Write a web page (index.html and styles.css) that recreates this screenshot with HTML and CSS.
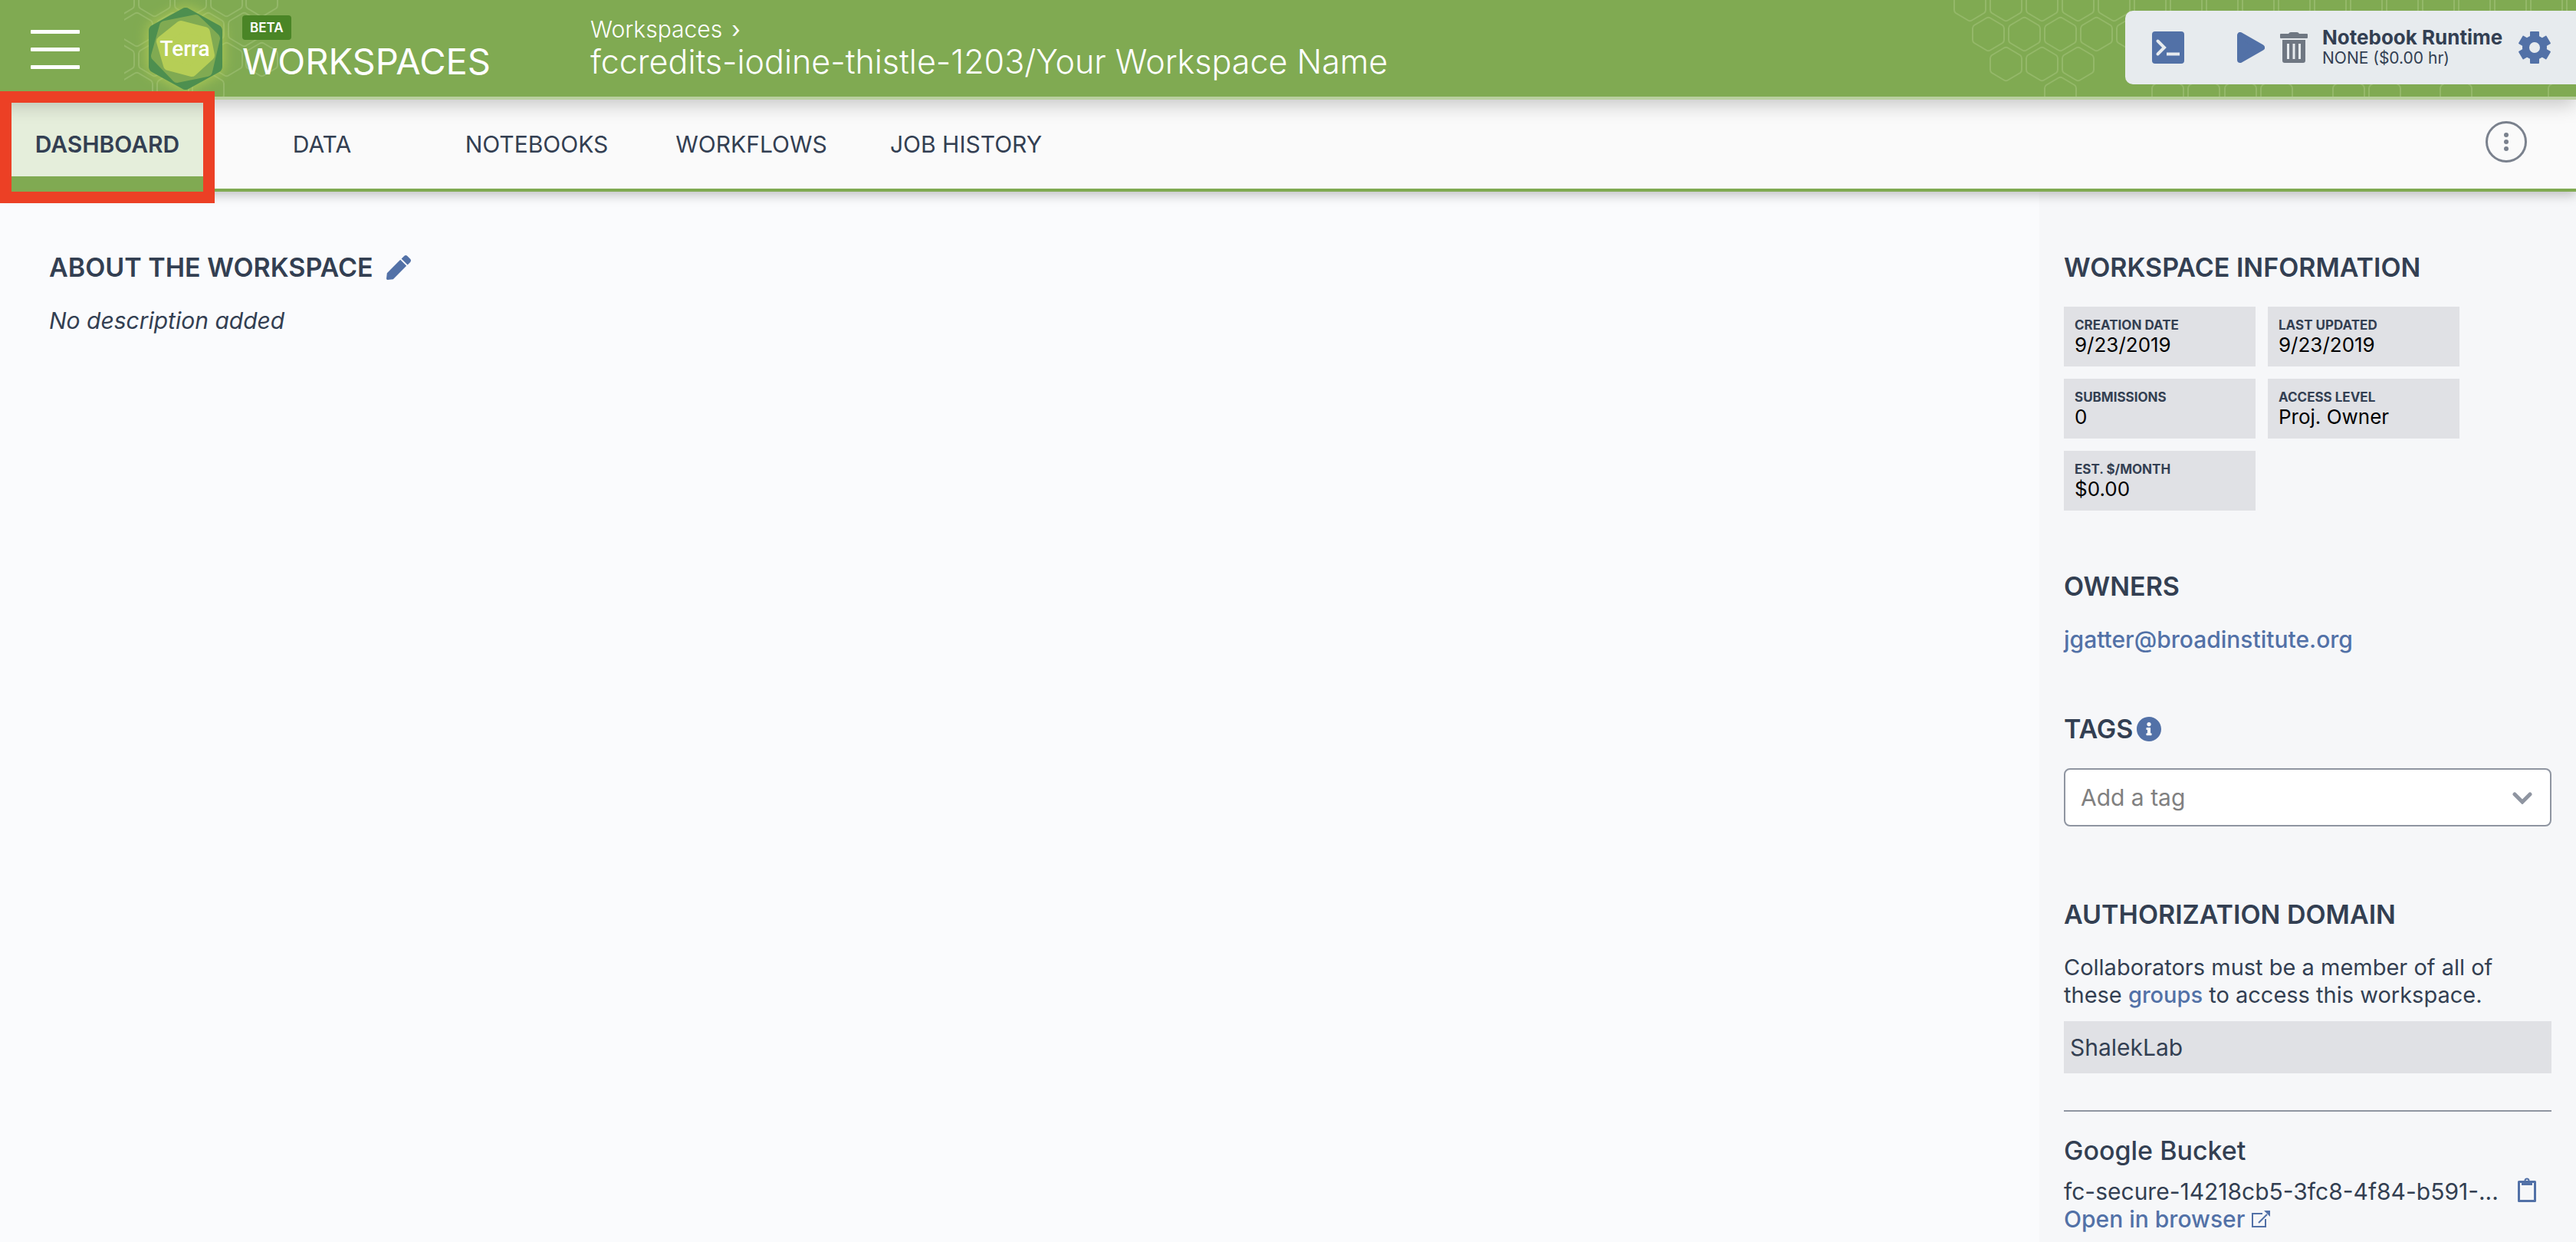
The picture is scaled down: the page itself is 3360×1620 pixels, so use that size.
FILE: index.html
```html
<!DOCTYPE html>
<html lang="en">
<head>
<meta charset="utf-8">
<title>Workspace dashboard</title>
<meta name="viewport" content="width=device-width, initial-scale=1">
<link rel="stylesheet" href="styles.css">
</head>
<body>
<header class="topbar">
  <svg class="topbar-pattern" width="820" height="126" viewBox="0 0 820 126" aria-hidden="true">
    <defs>
      <path id="hex" d="M18 1.500Q20.500 0 23 1.500L39 11Q41 12.500 41 15V30Q41 32.500 39 34L23 43.500Q20.500 45 18 43.500L2 34Q0 32.500 0 30V15Q0 12.500 2 11Z"/>
    </defs>
    <g fill="none" stroke="#94b869" stroke-width="2">
      <use href="#hex" x="9" y="-17"/><use href="#hex" x="56" y="-17"/><use href="#hex" x="103" y="-17"/><use href="#hex" x="150" y="-17"/><use href="#hex" x="197" y="-17"/><use href="#hex" x="244" y="-17"/><use href="#hex" x="291" y="-17"/><use href="#hex" x="338" y="-17"/><use href="#hex" x="385" y="-17"/><use href="#hex" x="432" y="-17"/><use href="#hex" x="479" y="-17"/><use href="#hex" x="526" y="-17"/><use href="#hex" x="573" y="-17"/><use href="#hex" x="620" y="-17"/><use href="#hex" x="667" y="-17"/><use href="#hex" x="714" y="-17"/><use href="#hex" x="761" y="-17"/><use href="#hex" x="808" y="-17"/>
      <use href="#hex" x="33" y="22"/><use href="#hex" x="80" y="22"/><use href="#hex" x="127" y="22"/><use href="#hex" x="174" y="22"/><use href="#hex" x="221" y="22"/>
      <use href="#hex" x="56" y="61"/><use href="#hex" x="103" y="61"/><use href="#hex" x="150" y="61"/>
      <use href="#hex" x="127" y="100"/><use href="#hex" x="267" y="100"/><use href="#hex" x="314" y="100"/><use href="#hex" x="362" y="100"/><use href="#hex" x="409" y="100"/><use href="#hex" x="503" y="100"/><use href="#hex" x="550" y="100"/><use href="#hex" x="643" y="100"/><use href="#hex" x="784" y="100"/>
    </g>
  </svg>
  <button class="burger" type="button" aria-label="Menu"><span></span><span></span><span></span></button>
  <a class="brand" href="#" aria-label="Terra home">
    <svg width="208" height="126" viewBox="0 0 208 126">
      <g fill="none" stroke="#94b869" stroke-width="2">
        <use href="#hex" x="-28" y="-23"/><use href="#hex" x="19" y="-23"/><use href="#hex" x="66" y="-23"/><use href="#hex" x="113" y="-23"/><use href="#hex" x="159" y="-23"/>
        <use href="#hex" x="-4" y="16"/><use href="#hex" x="43" y="16"/><use href="#hex" x="89" y="16"/><use href="#hex" x="136" y="16"/>
        <use href="#hex" x="-28" y="55"/><use href="#hex" x="19" y="55"/><use href="#hex" x="113" y="55"/><use href="#hex" x="159" y="55"/>
        <use href="#hex" x="-4" y="94"/><use href="#hex" x="43" y="94"/><use href="#hex" x="89" y="94"/>
      </g>
      <g stroke-linejoin="round">
        <path class="glow" d="M80 18L120 40V87L80 109L40 87V40Z" fill="#4d8f4f" stroke="#4d8f4f" stroke-width="16"/>
        <path d="M93 26L118 50L108 93L69 101L42 73L53 34Z" fill="#80aa52" stroke="#80aa52" stroke-width="14"/>
        <path d="M74 34L105 42L111 72L88 93L58 85L49 54Z" fill="#b6ce56" stroke="#b6ce56" stroke-width="14"/>
      </g>
      <text class="brand-name" x="79" y="73" text-anchor="middle">Terra</text>
    </svg>
  </a>
  <div class="product">
    <span class="beta">BETA</span>
    <span class="product-name">WORKSPACES</span>
  </div>
  <div class="crumbs">
    <a class="crumb" href="#">Workspaces<span class="crumb-arrow">›</span></a>
    <h1 class="workspace-name">fccredits-iodine-thistle-1203/Your Workspace Name</h1>
  </div>
  <div class="runtime">
    <button class="icon-button terminal" type="button" aria-label="Open terminal">
      <svg width="42" height="42" viewBox="0 0 42 42"><rect width="42" height="42" rx="4" fill="#5271a7"/><path d="M7.500 12.500L16 21L7.500 29.500" fill="none" stroke="#e7ebee" stroke-width="4" stroke-linecap="round"/><path d="M19 29.500H36" stroke="#e7ebee" stroke-width="4"/></svg>
    </button>
    <button class="icon-button" type="button" aria-label="Start runtime">
      <svg width="36" height="40" viewBox="0 0 36 40"><path fill="#5271a7" stroke="#5271a7" stroke-width="8" stroke-linejoin="round" d="M4 4V36L32 20Z"/></svg>
    </button>
    <button class="icon-button trash" type="button" aria-label="Delete runtime">
      <svg width="36" height="40" viewBox="0 0 36 40"><path fill="#6f7782" d="M1 2H11Q12 0 14 0H22Q24 0 25 2H35Q36 2 36 3V7Q36 8 35 8H1Q0 8 0 7V3Q0 2 1 2ZM3 10H33V37Q33 40 30 40H6Q3 40 3 37Z"/><path d="M10.500 15V35M18 15V35M25.500 15V35" stroke="#e7ebee" stroke-width="3"/></svg>
    </button>
    <div class="runtime-text">
      <strong>Notebook Runtime</strong>
      <span>NONE ($0.00 hr)</span>
    </div>
    <button class="icon-button" type="button" aria-label="Runtime settings">
      <svg width="42" height="42" viewBox="-21 -21 42 42">
        <defs><path id="tooth" d="M-5 -21H5Q6 -21 6 -20V-13L8 -8H-8L-6 -13V-20Q-6 -21 -5 -21Z"/></defs>
        <g fill="#5271a7">
          <circle r="16"/>
          <use href="#tooth"/><use href="#tooth" transform="rotate(60)"/><use href="#tooth" transform="rotate(120)"/><use href="#tooth" transform="rotate(180)"/><use href="#tooth" transform="rotate(240)"/><use href="#tooth" transform="rotate(300)"/>
        </g>
        <circle r="7" fill="#e7ebee"/>
      </svg>
    </button>
  </div>
</header>

<nav class="tabs" aria-label="Workspace">
  <a class="tab tab-active" href="#" aria-current="page">DASHBOARD<span class="highlight"></span></a>
  <a class="tab" href="#">DATA</a>
  <a class="tab" href="#">NOTEBOOKS</a>
  <a class="tab" href="#">WORKFLOWS</a>
  <a class="tab" href="#">JOB HISTORY</a>
  <button class="icon-button tabs-menu" type="button" aria-label="Workspace menu">
    <svg width="54" height="54" viewBox="0 0 54 54"><circle cx="27" cy="27" r="25.500" fill="none" stroke="#7a818d" stroke-width="3"/><g fill="#7a818d"><circle cx="27" cy="18" r="3"/><circle cx="27" cy="27" r="3"/><circle cx="27" cy="36" r="3"/></g></svg>
  </button>
</nav>

<div class="page">
  <main class="about">
    <h2 class="heading">ABOUT THE WORKSPACE
      <button class="icon-button edit" type="button" aria-label="Edit description"><svg width="32" height="32" viewBox="0 0 512 512"><path fill="#5271a7" d="M290.740 93.240l128.020 128.020-277.990 277.990-114.140 12.600C11.350 513.540-1.560 500.620.14 485.340l12.700-114.220 277.900-277.880zm207.200-19.060l-60.110-60.110c-18.750-18.750-49.160-18.750-67.910 0l-56.550 56.550 128.020 128.020 56.550-56.550c18.750-18.760 18.750-49.160 0-67.910z"/></svg></button>
    </h2>
    <p class="empty">No description added</p>
  </main>

  <aside class="sidebar">
    <section class="section">
      <h2 class="heading">WORKSPACE INFORMATION</h2>
      <dl class="tiles">
        <div class="tile"><dt>CREATION DATE</dt><dd>9/23/2019</dd></div>
        <div class="tile"><dt>LAST UPDATED</dt><dd>9/23/2019</dd></div>
        <div class="tile"><dt>SUBMISSIONS</dt><dd>0</dd></div>
        <div class="tile"><dt>ACCESS LEVEL</dt><dd>Proj. Owner</dd></div>
        <div class="tile"><dt>EST. $/MONTH</dt><dd>$0.00</dd></div>
      </dl>
    </section>
    <section class="section">
      <h2 class="heading">OWNERS</h2>
      <a class="link" href="mailto:jgatter@broadinstitute.org">jgatter@broadinstitute.org</a>
    </section>
    <section class="section">
      <h2 class="heading"><label for="tags">TAGS</label>
        <button class="icon-button info" type="button" aria-label="About tags"><svg width="32" height="32" viewBox="8 8 496 496"><path fill="#5271a7" d="M256 8C119.043 8 8 119.083 8 256c0 136.997 111.043 248 248 248s248-111.003 248-248C504 119.083 392.957 8 256 8zm0 110c23.196 0 42 18.804 42 42s-18.804 42-42 42-42-18.804-42-42 18.804-42 42-42zm56 254c0 6.627-5.373 12-12 12h-88c-6.627 0-12-5.373-12-12v-24c0-6.627 5.373-12 12-12h12v-64h-12c-6.627 0-12-5.373-12-12v-24c0-6.627 5.373-12 12-12h64c6.627 0 12 5.373 12 12v100h12c6.627 0 12 5.373 12 12v24z"/></svg></button>
      </h2>
      <div class="select">
        <select id="tags"><option>Add a tag</option></select>
        <svg class="chevron" width="26" height="16" viewBox="0 0 26 16" aria-hidden="true"><path d="M3 3L13 13L23 3" fill="none" stroke="#8f95a1" stroke-width="5" stroke-linecap="round"/></svg>
      </div>
    </section>
    <section class="section">
      <h2 class="heading">AUTHORIZATION DOMAIN</h2>
      <p class="text">Collaborators must be a member of all of these <a class="link" href="#">groups</a> to access this workspace.</p>
      <div class="domain">ShalekLab</div>
    </section>
    <section class="bucket">
      <h3 class="subheading">Google Bucket</h3>
      <div class="bucket-row">
        <span class="bucket-name">fc-secure-14218cb5-3fc8-4f84-b591-...</span>
        <button class="icon-button" type="button" aria-label="Copy bucket name"><svg width="24" height="32" viewBox="0 0 24 32"><path d="M1.500 5.500H22.500V30.500H1.500Z" fill="none" stroke="#5271a7" stroke-width="3" stroke-linejoin="round"/><path fill="#5271a7" fill-rule="evenodd" d="M5 4H8.500A3.500 3.500 0 0 1 15.500 4H19V10H5ZM12 2.500A1.500 1.500 0 1 0 12 5.500A1.500 1.500 0 1 0 12 2.500Z"/></svg></button>
      </div>
      <a class="link open-link" href="#">Open in browser
        <svg width="24" height="22" viewBox="0 0 24 22" aria-hidden="true"><path d="M14 4H1V21H18V11M9 16L20 5" fill="none" stroke="#5271a7" stroke-width="2"/><path d="M16 0H24V8Z" fill="#5271a7"/></svg></a>
    </section>
  </aside>
</div>
</body>
</html>
```

FILE: styles.css
```css
* { box-sizing: border-box; }

body {
  margin: 0;
  min-height: 100vh;
  display: flex;
  flex-direction: column;
  background: #fafbfd;
  color: #333f52;
  font: 400 30px/36px Inter, "Open Sans", sans-serif;
}

h1, h2, h3, p, dl, dd { margin: 0; }
a { color: inherit; text-decoration: none; }

.icon-button {
  display: flex;
  padding: 0;
  border: 0;
  background: none;
  cursor: pointer;
}

.topbar {
  position: relative;
  z-index: 2;
  display: flex;
  align-items: flex-start;
  height: 130px;
  padding-left: 40px;
  background: #80aa52;
  border-bottom: 4px solid #b9cf9f;
  box-shadow: 0 6px 24px rgba(0, 0, 0, 0.22);
  color: #fff;
}

.topbar-pattern { position: absolute; top: 0; right: 0; }

.burger {
  display: flex;
  flex-direction: column;
  gap: 18px;
  width: 64px;
  margin-top: 39px;
  padding: 0;
  border: 0;
  background: none;
}
.burger span { height: 5px; border-radius: 1px; background: #fff; }

.brand { width: 154px; margin-left: 58px; }
.brand svg { display: block; }
.glow { filter: drop-shadow(0 0 9px #b6ce56); }
.brand-name { font: 500 28px Roboto, sans-serif; fill: #fff; }

.product, .crumbs {
  position: relative;
  display: flex;
  flex-direction: column;
  align-items: flex-start;
  padding-top: 20px;
}
.product { width: 454px; }
.beta {
  padding: 0 10px;
  border-radius: 4px;
  background: #4a8526;
  font-size: 17px;
  font-weight: 600;
  line-height: 32px;
}
.product-name { font-size: 47px; line-height: 56px; }
.crumb { font-weight: 300; }
.crumb-arrow { margin-left: 12px; font-weight: 400; }
.workspace-name { font-size: 43px; font-weight: 300; line-height: 48px; white-space: nowrap; }

.runtime {
  position: relative;
  display: flex;
  align-items: center;
  height: 96px;
  margin: 14px 0 0 auto;
  padding: 0 33px 0 35px;
  border-radius: 10px 0 0 10px;
  background: #e7ebee;
  color: #333f52;
}
.terminal { margin-right: 69px; }
.trash { margin: 0 19px 0 20px; }
.runtime-text { display: flex; flex-direction: column; width: 256px; white-space: nowrap; }
.runtime-text strong { font-size: 26px; font-weight: 700; line-height: 28px; }
.runtime-text span { font-size: 21px; line-height: 26px; }

.tabs {
  position: relative;
  display: flex;
  height: 120px;
  background: #fafafa;
  box-shadow: inset 0 -4px #80aa52, 0 4px 14px rgba(0, 0, 0, 0.25);
}
.tab {
  position: relative;
  width: 280px;
  line-height: 116px;
  text-align: center;
}
.tab-active { background: #e5eedb; box-shadow: inset 0 -20px #80aa52; font-weight: 600; }
/* Callout frame that marks the current tab */
.highlight {
  position: absolute;
  z-index: 3;
  inset: -11px 0 -15px;
  border: 15px solid #ec4025;
}
.tabs-menu { margin: 28px 64px auto auto; }

.page { flex: 1; display: flex; align-items: stretch; }
.about { flex: 1; padding: 79px 64px; }
.sidebar { width: 700px; padding: 0 32px 12px; background: #f6f7f9; }

.heading {
  display: flex;
  align-items: center;
  margin-bottom: 31px;
  font-size: 34px;
  font-weight: 600;
  line-height: 40px;
}
.edit { margin-left: 17px; }
.info { margin-left: 5px; }
.empty { font-style: italic; }

.section { padding-top: 79px; }
.link { display: block; color: #5271a7; font-weight: 500; }
.text { font-size: 29px; }
.text .link { display: inline; }

.tiles { display: grid; grid-template-columns: 250px 250px; gap: 16px; }
.tile { height: 78px; padding: 14px; background: #e0e1e5; }
.tile dt { font-size: 17px; font-weight: 700; line-height: 20px; }
.tile dd { color: #000; font-size: 26px; line-height: 32px; }

.select { position: relative; margin-bottom: 16px; }
.select select {
  display: block;
  width: 100%;
  height: 76px;
  padding: 0 20px;
  border: 2px solid #8f95a1;
  border-radius: 8px;
  background: #fff;
  color: #808080;
  font: inherit;
  appearance: none;
}
.chevron { position: absolute; top: 31px; right: 25px; pointer-events: none; }

.domain { margin-top: 16px; padding: 16px 8px; background: #e0e1e5; }

.bucket { margin-top: 48px; padding-top: 31px; border-top: 2px solid #8f95a1; }
.subheading { margin-bottom: 15px; font-size: 34px; font-weight: 500; line-height: 40px; }
.bucket-row { display: flex; justify-content: space-between; padding-right: 20px; }
.bucket-name { white-space: nowrap; }
.open-link { display: flex; align-items: center; gap: 9px; }
```
